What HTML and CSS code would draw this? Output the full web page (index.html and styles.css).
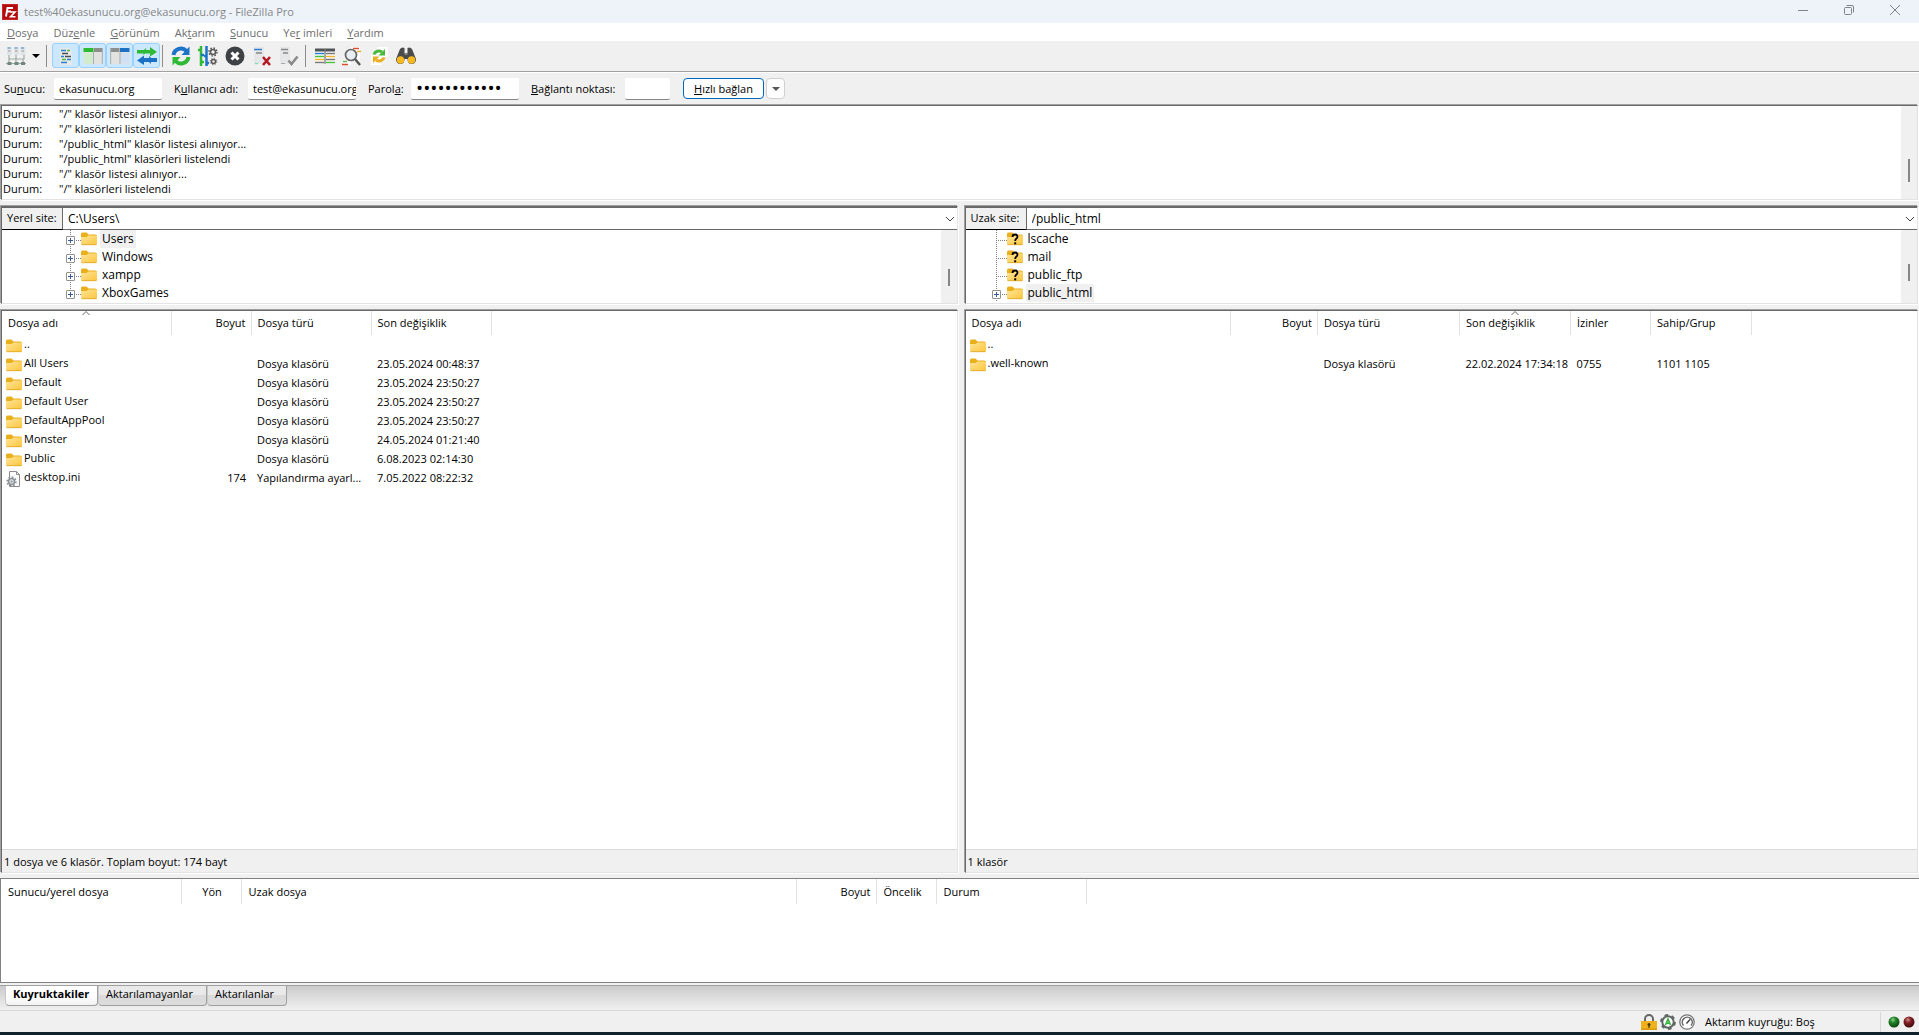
FILE: index.html
```html
<!DOCTYPE html>
<html lang="tr">
<head>
  <meta charset="utf-8">
  <title>test%40ekasunucu.org@ekasunucu.org - FileZilla Pro</title>
  <link rel="stylesheet" href="styles.css">
</head>
<body>

<!-- shared icons -->
<svg class="defs" aria-hidden="true">
  <defs>
    <linearGradient id="fold" x1="0" y1="0" x2="1" y2="1">
      <stop offset="0" stop-color="#ffe49a"/>
      <stop offset="1" stop-color="#fdc63c"/>
    </linearGradient>
    <radialGradient id="green" cx=".4" cy=".3" r=".7">
      <stop offset="0" stop-color="#8fce8f"/>
      <stop offset=".4" stop-color="#1f8426"/>
      <stop offset="1" stop-color="#0a4510"/>
    </radialGradient>
    <radialGradient id="red" cx=".4" cy=".3" r=".7">
      <stop offset="0" stop-color="#cf9090"/>
      <stop offset=".4" stop-color="#831f24"/>
      <stop offset="1" stop-color="#400a0e"/>
    </radialGradient>
    <symbol id="folder" viewBox="0 0 16 16">
      <path d="M0 3q0-1.500 1.500-1.500h4L7.500 3.500H14q2 0 2 1.500v3H0z" fill="#e9b01c"/>
      <path d="M0 6h5.500L7.500 4.500H15q1 0 1 1V12.500q0 1.500-1.500 1.500h-13Q0 14 0 12.500z" fill="url(#fold)"/>
      <path d="M.5 13.700h15" stroke="#dba523" stroke-width=".8"/>
    </symbol>
    <symbol id="unknown" viewBox="0 0 16 16">
      <use href="#folder"/>
      <path d="M5.500 6Q5.500 3.500 8 3.500t2.500 2.200Q10.500 7 9.200 7.800 8.200 8.500 8.200 10" fill="none" stroke="#000" stroke-width="1.800"/>
      <path d="M7.200 11.300h2v2h-2z"/>
    </symbol>
    <symbol id="ini" viewBox="0 0 16 16">
      <path d="M3.500.5h7l3 3v12h-10z" fill="#fafafa" stroke="#8c8c8c"/>
      <path d="M10.500.5v3h3" fill="none" stroke="#8c8c8c"/>
      <circle cx="5.500" cy="10.500" r="3" fill="#dfe3e6" stroke="#8b9196" stroke-width="1.500"/>
      <circle cx="5.500" cy="10.500" r="4.400" fill="none" stroke="#8b9196" stroke-width="1.500" stroke-dasharray="1.700 1.700"/>
      <circle cx="5.500" cy="10.500" r="1" fill="#8b9196"/>
    </symbol>
    <symbol id="sort" viewBox="0 0 8 4">
      <path d="M.5 4L4 .5 7.500 4" fill="none" stroke="#666"/>
    </symbol>
    <symbol id="chevron" viewBox="0 0 10 6">
      <path d="M1 1l4 4 4-4" fill="none" stroke="#444"/>
    </symbol>
  </defs>
</svg>

<header class="titlebar">
  <svg class="logo" viewBox="0 0 16 16">
    <path fill="#b00d0d" d="M0 0h16v16H0z"/>
    <path d="M.5.500h15v15H.5z" fill="none" stroke="#d44" stroke-dasharray="1 1"/>
    <path d="M4 12.500L5.500 4H11M5 7.500h4" fill="none" stroke="#fff" stroke-width="1.900"/>
    <path d="M8.500 8h4.500L8.500 12.700h5" fill="none" stroke="#fff" stroke-width="1.600"/>
  </svg>
  <span class="caption">test%40ekasunucu.org@ekasunucu.org - FileZilla Pro</span>
  <button class="winbtn" aria-label="Simge durumuna küçült"><svg viewBox="0 0 12 12"><path d="M1 6.500h10"/></svg></button>
  <button class="winbtn" aria-label="Önceki boyut"><svg viewBox="0 0 12 12"><rect x="1.500" y="3.500" width="7" height="7" rx="1"/><path d="M3.500 1.500H9q1.500 0 1.500 1.500v5.500"/></svg></button>
  <button class="winbtn" aria-label="Kapat"><svg viewBox="0 0 12 12"><path d="M1 1l10 10M11 1L1 11"/></svg></button>
</header>

<nav class="menu">
  <a href="#"><u>D</u>osya</a>
  <a href="#">Düz<u>e</u>nle</a>
  <a href="#"><u>G</u>örünüm</a>
  <a href="#">Ak<u>t</u>arım</a>
  <a href="#"><u>S</u>unucu</a>
  <a href="#">Ye<u>r</u> imleri</a>
  <a href="#"><u>Y</u>ardım</a>
</nav>

<div class="toolbar">
  <button class="tool" aria-label="Site yöneticisi">
    <svg viewBox="0 0 20 20">
      <path d="M1 1h5v8H1zM8 1h5v8H8zM14.500 1h5v8h-5z" fill="#dfe3e6"/>
      <path d="M1.500 2h3M8.500 2h3M15 2h3" stroke="#3a87cf" stroke-width="1.200"/>
      <path d="M2 5h2.500M9 5h2.500M15.500 5H18" stroke="#999"/>
      <path d="M3 9v4h15V9M10 9v7M3 13v3M17 13v3M0 17.500h20" fill="none" stroke="#9dabA5" stroke-width="1.200"/>
      <path d="M1.500 16h4v3h-4zM8.500 16h4v3h-4zM15 16h4v3h-4z" fill="#71867c"/>
    </svg>
  </button>
  <button class="drop" aria-label="Siteler"><svg viewBox="0 0 8 4"><path d="M0 0h8L4 4z"/></svg></button>
  <span class="sep"></span>
  <button class="tool on" aria-label="İleti günlüğü">
    <svg viewBox="0 0 20 20">
      <path d="M4 2h9l3 3v14H4z" fill="#e6e8ea"/>
      <path d="M5 4.500h5M5 10.500h3M11 13.500h4M5 16.500h6" stroke="#2f7fd0" stroke-width="1.300"/>
      <path d="M6 7.500h6M9 10.500h6" stroke="#4b5157" stroke-width="1.300"/>
      <path d="M6 13.500h4M11 4.500h3" stroke="#52b93f" stroke-width="1.300"/>
    </svg>
  </button>
  <button class="tool on" aria-label="Yerel klasör ağacı">
    <svg viewBox="0 0 20 20">
      <path d="M.5 2h19v16H.5z" fill="#e2e2e0"/>
      <path d="M.5 2h10v4H.5z" fill="#2dbb32"/><path d="M11 2h8.500v4H11z" fill="#8b8f8d"/>
      <path d="M1 7h8.500v10.500H1z" fill="#cfeccb"/><path d="M10.500 6v12M19.300 2v16" stroke="#a9adab" fill="none"/>
    </svg>
  </button>
  <button class="tool on" aria-label="Uzak klasör ağacı">
    <svg viewBox="0 0 20 20">
      <path d="M.5 2h19v16H.5z" fill="#e2e2e0"/>
      <path d="M.5 2h9v4h-9z" fill="#8b8f8d"/><path d="M10 2h9.500v4H10z" fill="#1c70c6"/>
      <path d="M10.500 7H19v10.500h-8.500z" fill="#cfe0f2"/><path d="M10 6v12M.7 2v16" stroke="#a9adab" fill="none"/>
    </svg>
  </button>
  <button class="tool on" aria-label="Aktarım kuyruğu">
    <svg viewBox="0 0 20 20">
      <path d="M0 4h7l2-2v2h4V1l7 5-7 4.500V7.500H8L6.500 9V7.500H0z" fill="#2fb936"/>
      <path d="M20 12h-6l-2-2v2H7V9.500l-7 5L7 19v-3h5l2 2v-2h6z" fill="#1d71c4"/>
    </svg>
  </button>
  <span class="sep tight"></span>
  <button class="tool" aria-label="Yenile">
    <svg viewBox="0 0 20 20">
      <path d="M2.500 9A7.500 7.500 0 0 1 15.500 5" fill="none" stroke="#1c73c8" stroke-width="4"/>
      <path d="M18.500.5v8.500h-8z" fill="#1c73c8"/>
      <path d="M17.500 11A7.500 7.500 0 0 1 4.500 15" fill="none" stroke="#2fb936" stroke-width="4"/>
      <path d="M1.500 19.500V11h8z" fill="#2fb936"/>
    </svg>
  </button>
  <button class="tool" aria-label="Kuyruğu işle">
    <svg viewBox="0 0 20 20">
      <path d="M3 0v20M0 4h3M3 16h3" stroke="#2fb936" stroke-width="2.500"/>
      <path d="M8.500 0v20M6 10h3M8 17h3M3 9h3" stroke="#1c73c8" stroke-width="2.500"/>
      <g fill="none" stroke="#575757">
        <circle cx="15" cy="6" r="2.500" stroke-width="1.500"/><circle cx="15" cy="6" r="4" stroke-width="1.500" stroke-dasharray="1.500 1.640"/>
        <circle cx="15.500" cy="15.500" r="2" stroke-width="1.500"/><circle cx="15.500" cy="15.500" r="3.300" stroke-dasharray="1.200 1.390"/>
      </g>
    </svg>
  </button>
  <button class="tool" aria-label="İptal">
    <svg viewBox="0 0 20 20">
      <circle cx="10" cy="10" r="9.500" fill="#3f4244"/>
      <path d="M6.500 6.500l7 7M13.500 6.500l-7 7" stroke="#fff" stroke-width="3"/>
    </svg>
  </button>
  <button class="tool" aria-label="Bağlantıyı kes">
    <svg viewBox="0 0 20 20">
      <path d="M2 1h10v17H2z" fill="#e4e6e7"/>
      <path d="M2 3.500h8" stroke="#2b7fd3" stroke-width="1.500"/><path d="M4 7h6" stroke="#777" stroke-width="1.300"/>
      <path d="M3 17.500h3" stroke="#8db" stroke-width="1.500"/>
      <path d="M11 11l7 8M18 11l-7 8" stroke="#b71722" stroke-width="2.600"/>
    </svg>
  </button>
  <button class="tool" aria-label="Yeniden bağlan">
    <svg viewBox="0 0 20 20">
      <path d="M1 1h10v17H1z" fill="#e4e6e7"/>
      <path d="M2 3.500h7M4 7h5" stroke="#888" stroke-width="1.500"/><path d="M2 17.500h4" stroke="#aaa"/>
      <path d="M9.500 14.500l3 3.500 6-7.500" fill="none" stroke="#8a8a8a" stroke-width="2.600"/>
    </svg>
  </button>
  <span class="sep"></span>
  <button class="tool" aria-label="Karşılaştır">
    <svg viewBox="0 0 20 20">
      <path d="M0 3h20v15H0z" fill="#fff"/>
      <path d="M0 4h20" stroke="#4f5455" stroke-width="3"/>
      <path d="M0 7.500h9" stroke="#2a7dd1" stroke-width="1.500"/><path d="M0 10.500h9M11 16.500h9" stroke="#4cbf40" stroke-width="1.500"/>
      <path d="M0 13.500h9M11 10.500h9" stroke="#f0b52d" stroke-width="1.500"/>
      <path d="M11 7.500h9M11 13.500h9M0 16.500h9M10 3v15" stroke="#777" stroke-width="1.300"/>
    </svg>
  </button>
  <button class="tool" aria-label="Süzgeç">
    <svg viewBox="0 0 20 20">
      <path d="M9 1h9v14H9z" fill="#fff"/><path d="M1 14h8v5H1z" fill="#fff"/>
      <path d="M11 2.500h6" stroke="#e04b32" stroke-width="1.500"/><path d="M15 5.500h4" stroke="#e8ad26" stroke-width="1.500"/>
      <path d="M1 15.500h4" stroke="#4fb942" stroke-width="1.500"/><path d="M0 18.500h6" stroke="#e04b32" stroke-width="1.500"/>
      <circle cx="9" cy="9" r="5.500" fill="#e8eef2" stroke="#676767" stroke-width="1.700"/>
      <path d="M13 13l5 6" stroke="#555" stroke-width="2.400"/>
    </svg>
  </button>
  <button class="tool" aria-label="Eşzamanlı gezinme">
    <svg viewBox="0 0 20 20">
      <path d="M8 1h11v10H8zM2 9h10v10H2z" fill="#fff"/>
      <path d="M5 8.500A5 4.500 0 0 1 13 6" fill="none" stroke="#48b93d" stroke-width="3"/><path d="M16 3v6.500H9.500z" fill="#48b93d"/>
      <path d="M15 11.500A5 4.500 0 0 1 7 14" fill="none" stroke="#eaad20" stroke-width="3"/><path d="M4 17v-6.500h6.500z" fill="#eaad20"/>
    </svg>
  </button>
  <button class="tool" aria-label="Dosya ara">
    <svg viewBox="0 0 20 20">
      <path d="M4 3q2-2.500 4.500-1v5h3V2q2.500-1.500 4.500 1l4 10q0 5-4.500 5-4 0-4-5h-3q0 5-4 5Q0 18 0 13z" fill="#4b4b4b"/>
      <circle cx="4.500" cy="14" r="3.700" fill="#f8b91f"/><circle cx="15.500" cy="14" r="3.700" fill="#f8b91f"/>
      <path d="M8.500 8h3" stroke="#999" stroke-width="1.500"/>
    </svg>
  </button>
</div>

<form class="quick">
  <label class="l-host" for="host">Su<u>n</u>ucu:</label>
  <input type="text" id="host" value="ekasunucu.org">
  <label class="l-user" for="user">K<u>u</u>llanıcı adı:</label>
  <input type="text" id="user" value="test@ekasunucu.org">
  <label class="l-pass" for="pass">Parol<u>a</u>:</label>
  <input type="password" id="pass" class="dots" value="123456789012">
  <label class="l-port" for="port"><u>B</u>ağlantı noktası:</label>
  <input type="text" id="port" class="port">
  <button type="button" class="connect"><u>H</u>ızlı bağlan</button>
  <button type="button" class="history" aria-label="Geçmiş"><svg viewBox="0 0 8 4"><path d="M0 0h8L4 4z" fill="#555"/></svg></button>
</form>

<section class="frame log">
  <table>
    <tr><td>Durum:</td><td>"/" klasör listesi alınıyor...</td></tr>
    <tr><td>Durum:</td><td>"/" klasörleri listelendi</td></tr>
    <tr><td>Durum:</td><td>"/public_html" klasör listesi alınıyor...</td></tr>
    <tr><td>Durum:</td><td>"/public_html" klasörleri listelendi</td></tr>
    <tr><td>Durum:</td><td>"/" klasör listesi alınıyor...</td></tr>
    <tr><td>Durum:</td><td>"/" klasörleri listelendi</td></tr>
  </table>
  <div class="scroll s-log"><i></i></div>
</section>

<main class="panes">
  <section class="pane local">
    <div class="frame top">
      <div class="path">
        <label for="lpath">Yerel site:</label>
        <div class="combo">
          <select id="lpath"><option>C:\Users\</option></select>
          <svg><use href="#chevron"/></svg>
        </div>
      </div>
      <div class="treebox">
        <ul class="tree">
          <li class="node"><b class="plus"></b><svg><use href="#folder"/></svg><span class="sel">Users</span></li>
          <li class="node"><b class="plus"></b><svg><use href="#folder"/></svg><span>Windows</span></li>
          <li class="node"><b class="plus"></b><svg><use href="#folder"/></svg><span>xampp</span></li>
          <li class="node last"><b class="plus"></b><svg><use href="#folder"/></svg><span>XboxGames</span></li>
        </ul>
        <div class="scroll s-local"><i></i></div>
      </div>
    </div>
    <div class="frame list">
      <div class="files">
        <table>
          <colgroup><col class="w169"><col class="w80"><col class="w120"><col class="w120"></colgroup>
          <thead>
            <tr><th>Dosya adı<svg class="sort"><use href="#sort"/></svg></th><th class="num">Boyut</th><th>Dosya türü</th><th>Son değişiklik</th></tr>
          </thead>
          <tbody>
            <tr><td class="name"><svg><use href="#folder"/></svg>..</td><td></td><td></td><td></td></tr>
            <tr><td class="name"><svg><use href="#folder"/></svg>All Users</td><td></td><td>Dosya klasörü</td><td>23.05.2024 00:48:37</td></tr>
            <tr><td class="name"><svg><use href="#folder"/></svg>Default</td><td></td><td>Dosya klasörü</td><td>23.05.2024 23:50:27</td></tr>
            <tr><td class="name"><svg><use href="#folder"/></svg>Default User</td><td></td><td>Dosya klasörü</td><td>23.05.2024 23:50:27</td></tr>
            <tr><td class="name"><svg><use href="#folder"/></svg>DefaultAppPool</td><td></td><td>Dosya klasörü</td><td>23.05.2024 23:50:27</td></tr>
            <tr><td class="name"><svg><use href="#folder"/></svg>Monster</td><td></td><td>Dosya klasörü</td><td>24.05.2024 01:21:40</td></tr>
            <tr><td class="name"><svg><use href="#folder"/></svg>Public</td><td></td><td>Dosya klasörü</td><td>6.08.2023 02:14:30</td></tr>
            <tr><td class="name"><svg><use href="#ini"/></svg>desktop.ini</td><td class="num">174</td><td>Yapılandırma ayarl...</td><td>7.05.2022 08:22:32</td></tr>
          </tbody>
        </table>
      </div>
      <div class="info">1 dosya ve 6 klasör. Toplam boyut: 174 bayt</div>
    </div>
  </section>

  <section class="pane remote">
    <div class="frame top">
      <div class="path">
        <label for="rpath">Uzak site:</label>
        <div class="combo">
          <select id="rpath"><option>/public_html</option></select>
          <svg><use href="#chevron"/></svg>
        </div>
      </div>
      <div class="treebox">
        <ul class="tree">
          <li class="node"><b></b><svg><use href="#unknown"/></svg><span>lscache</span></li>
          <li class="node"><b></b><svg><use href="#unknown"/></svg><span>mail</span></li>
          <li class="node"><b></b><svg><use href="#unknown"/></svg><span>public_ftp</span></li>
          <li class="node"><b class="plus"></b><svg><use href="#folder"/></svg><span class="sel">public_html</span></li>
        </ul>
        <div class="scroll s-remote"><i></i></div>
      </div>
    </div>
    <div class="frame list">
      <div class="files">
        <table>
          <colgroup><col class="w265"><col class="w87"><col class="w142"><col class="w111"><col class="w80"><col class="w101"></colgroup>
          <thead>
            <tr><th>Dosya adı</th><th class="num">Boyut</th><th>Dosya türü</th><th>Son değişiklik<svg class="sort"><use href="#sort"/></svg></th><th>İzinler</th><th>Sahip/Grup</th></tr>
          </thead>
          <tbody>
            <tr><td class="name"><svg><use href="#folder"/></svg>..</td><td></td><td></td><td></td><td></td><td></td></tr>
            <tr><td class="name"><svg><use href="#folder"/></svg>.well-known</td><td></td><td>Dosya klasörü</td><td>22.02.2024 17:34:18</td><td>0755</td><td>1101 1105</td></tr>
          </tbody>
        </table>
      </div>
      <div class="info">1 klasör</div>
    </div>
  </section>
</main>

<section class="queue">
  <table>
    <colgroup><col class="w180"><col class="w60"><col class="w555"><col class="w80"><col class="w60"><col class="w150"></colgroup>
    <thead>
      <tr><th>Sunucu/yerel dosya</th><th class="mid">Yön</th><th>Uzak dosya</th><th class="num">Boyut</th><th>Öncelik</th><th>Durum</th></tr>
    </thead>
  </table>
</section>

<div class="tabs">
  <button class="tab active">Kuyruktakiler</button>
  <button class="tab">Aktarılamayanlar</button>
  <button class="tab short">Aktarılanlar</button>
</div>

<footer class="status">
  <svg viewBox="0 0 16 16">
    <path d="M4 8V5a4 4 0 0 1 8 0v3" fill="none" stroke="#666" stroke-width="2"/>
    <path d="M0 7h16v9H0z" fill="#f0b21c"/><path d="M0 14.500h16V16H0z" fill="#d99b0c"/>
    <circle cx="8" cy="10.500" r="1.500" fill="#4d3b11"/><path d="M8 11v3" stroke="#4d3b11" stroke-width="1.300"/>
  </svg>
  <svg viewBox="0 0 16 16">
    <circle cx="8" cy="8" r="5.700" fill="#fff" stroke="#5f6562" stroke-width="2"/>
    <circle cx="8" cy="8" r="7" fill="none" stroke="#5f6562" stroke-width="1.800" stroke-dasharray="3.600 3.730"/>
    <path d="M5.500 11L8 5l2.500 6M6.500 9.300h3" fill="none" stroke="#35b23b" stroke-width="1.600"/>
  </svg>
  <svg viewBox="0 0 16 16">
    <circle cx="8" cy="8" r="7.200" fill="#fff" stroke="#777" stroke-width="1.300"/>
    <path d="M4.500 11.500A5 5 0 1 1 12 11.500" fill="none" stroke="#666" stroke-width="1.500"/>
    <path d="M7.500 9.500L11 5.500" stroke="#444" stroke-width="1.500"/>
  </svg>
  <span class="qtext">Aktarım kuyruğu: Boş</span>
  <span class="leds">
    <svg viewBox="0 0 12 12"><circle cx="6" cy="6" r="5.500" fill="url(#green)"/></svg>
    <svg viewBox="0 0 12 12"><circle cx="6" cy="6" r="5.500" fill="url(#red)"/></svg>
  </span>
</footer>

</body>
</html>
```

FILE: styles.css
```css
* {
  box-sizing: border-box;
}
body {
  margin: 0;
  min-height: 100vh;
  display: flex;
  flex-direction: column;
  background: #f0f0f0;
  border-bottom: 3px solid #10232d;
  color: #000;
}
body, button, input, select {
  font-family: "Segoe UI", "Open Sans", sans-serif;
  font-size: 11px;
}
button {
  border: 0;
  padding: 0;
  background: none;
}
table {
  border-collapse: collapse;
  table-layout: fixed;
}
.defs {
  position: absolute;
  width: 0;
  height: 0;
}

/* title bar and menu */
.titlebar {
  display: flex;
  align-items: center;
  height: 23px;
  padding: 0 1px 0 2px;
  background: #eef3f9;
  color: #858789;
}
.logo {
  width: 16px;
  height: 16px;
  margin-right: 6px;
}
.caption {
  flex: 1;
}
.winbtn {
  width: 46px;
  height: 20px;
}
.winbtn svg {
  width: 12px;
  height: 12px;
  fill: none;
  stroke: #808488;
}
.menu {
  display: flex;
  gap: 15px;
  height: 18px;
  padding-left: 7px;
  background: #fff;
  line-height: 20px;
}
.menu a {
  color: #6d6d6d;
  text-decoration: none;
}

/* toolbar */
.toolbar {
  display: flex;
  align-items: center;
  height: 31px;
  padding: 0 0 1px 2px;
  border-bottom: 1px solid #a0a0a0;
}
.tool {
  display: flex;
  align-items: center;
  justify-content: center;
  width: 27px;
  height: 25px;
}
.tool svg {
  width: 20px;
  height: 20px;
}
.tool.on {
  background: #cce8ff;
  border: 1px solid #99d1ff;
  border-radius: 3px;
}
.drop {
  width: 14px;
  height: 24px;
}
.drop svg, .history svg {
  display: block;
  width: 8px;
  height: 4px;
  margin: auto;
}
.sep {
  width: 1px;
  height: 22px;
  margin: 0 5px 0 3px;
  background: #8d8d8d;
}
.sep.tight {
  margin: 0 4px 0 2px;
}

/* quick connect */
.quick {
  display: flex;
  align-items: center;
  height: 32px;
  padding: 0 4px;
  border-top: 1px solid #fff;
}
.quick input {
  width: 108px;
  height: 22px;
  padding: 0 0 0 5px;
  border: 0;
  border-bottom: 1px solid #868686;
  border-radius: 2px;
  background: #fff;
}
.quick input.dots {
  font-size: 19px;
}
.quick input.port {
  width: 45px;
}
.quick label {
  flex: none;
  white-space: nowrap;
}
.quick .l-host {
  width: 50px;
}
.quick .l-user {
  width: 86px;
  padding-left: 12px;
}
.quick .l-pass {
  width: 55px;
  padding-left: 12px;
}
.quick .l-port {
  width: 106px;
  padding-left: 12px;
}
.connect {
  width: 81px;
  height: 21px;
  margin: 0 2px 0 13px;
  background: #fdfdfd;
  border: 1px solid #0067c0;
  border-radius: 4px;
  white-space: nowrap;
}
.history {
  width: 19px;
  height: 21px;
  background: #fdfdfd;
  border: 1px solid #d0d0d0;
  border-radius: 4px;
}

/* sunken boxes */
.frame {
  margin: 1px;
  background: #fff;
  border: 1px solid;
  border-color: #696969 #e3e3e3 #e3e3e3 #696969;
  box-shadow: -1px -1px 0 #a0a0a0, 1px 1px 0 #fff;
}
.scroll {
  flex: none;
  width: 16px;
  background: #f0f0f0;
}
.scroll i {
  display: block;
  width: 2px;
  margin-left: 7px;
  background: #858585;
}
.s-log i {
  height: 23px;
  margin-top: 53px;
}
.s-local i {
  height: 17px;
  margin-top: 39px;
}
.s-remote i {
  height: 17px;
  margin-top: 34px;
}
.log {
  display: flex;
  justify-content: space-between;
  height: 95px;
}
.log table {
  align-self: flex-start;
}
.log td {
  height: 15px;
  padding: 0 0 0 1px;
  line-height: 15px;
  white-space: nowrap;
}
.log td:first-child {
  width: 56px;
}

/* local and remote sides */
.panes {
  flex: 1;
  display: flex;
  gap: 5px;
  margin: 4px 0;
}
.pane {
  display: flex;
  flex-direction: column;
  gap: 4px;
  min-width: 0;
}
.local {
  flex: 0 0 calc(50% - 1px);
}
.remote {
  flex: 1;
}
.path {
  display: flex;
  height: 23px;
  border-top: 1px solid #696969;
  border-bottom: 1px solid #696969;
}
.path label {
  height: 22px;
  width: 61px;
  padding-left: 5px;
  background: #f0f0f0;
  border-right: 1px solid #696969;
  border-bottom: 1px solid #000;
  line-height: 20px;
  white-space: nowrap;
}
.combo {
  flex: 1;
  position: relative;
}
.combo select {
  appearance: none;
  width: 100%;
  height: 21px;
  padding: 0 5px;
  border: 0;
  background: #fff;
  font-size: 12px;
}
.combo svg {
  position: absolute;
  right: 2px;
  top: 8px;
  width: 10px;
  height: 6px;
}
.treebox {
  display: flex;
  height: 73px;
  overflow: hidden;
  font-size: 12px;
}
.tree {
  flex: 1;
  margin: 0;
  padding: 0 0 0 64px;
  list-style: none;
}
.remote .tree {
  padding-left: 26px;
}
.node {
  display: flex;
  align-items: center;
  height: 18px;
  background:
    repeating-linear-gradient(#808080 0 1px, transparent 1px 2px) 4px 0 / 1px 18px no-repeat,
    repeating-linear-gradient(90deg, #808080 0 1px, transparent 1px 2px) 4px 10px / 11px 1px no-repeat;
}
.node.last {
  background-size: 1px 10px, 11px 1px;
}
.node b {
  width: 15px;
}
/* expander box, the plus is drawn with two bars */
.node .plus {
  width: 9px;
  height: 9px;
  margin: 2px 6px 0 0;
  border: 1px solid #919191;
  border-radius: 1px;
  background:
    linear-gradient(#3b5a9a, #3b5a9a) center / 5px 1px no-repeat,
    linear-gradient(#3b5a9a, #3b5a9a) center / 1px 5px no-repeat,
    #fff;
}
.node svg {
  width: 16px;
  height: 16px;
  margin-right: 3px;
}
.node span {
  height: 18px;
  padding: 0 2px;
  line-height: 18px;
}
.node .sel {
  background: #f0f0f0;
}

/* file lists */
.list {
  flex: 1;
  display: flex;
  flex-direction: column;
}
.files {
  flex: 1;
}
.files table, .queue table {
  width: 0;
}
th {
  position: relative;
  height: 24px;
  padding: 0 5px 1px 6px;
  border-right: 1px solid #e2e2e2;
  font-weight: normal;
  text-align: left;
  white-space: nowrap;
}
.files td {
  height: 19px;
  padding: 0 4px 0 6px;
  line-height: 18px;
  white-space: nowrap;
}
.files td.name {
  padding-left: 4px;
}
.name svg {
  width: 16px;
  height: 16px;
  margin-right: 2px;
  vertical-align: middle;
}
th.num, .files td.num {
  padding-right: 5px;
  text-align: right;
}
th.mid {
  text-align: center;
}
.sort {
  position: absolute;
  left: calc(50% - 4px);
  top: 0;
  width: 8px;
  height: 4px;
}
.w60 { width: 60px; }
.w80 { width: 80px; }
.w87 { width: 87px; }
.w101 { width: 101px; }
.w111 { width: 111px; }
.w120 { width: 120px; }
.w142 { width: 142px; }
.w150 { width: 150px; }
.w169 { width: 169px; }
.w180 { width: 180px; }
.w265 { width: 265px; }
.w555 { width: 555px; }
.info {
  height: 23px;
  padding-left: 2px;
  background: #f0f0f0;
  border-top: 1px solid #dadada;
  line-height: 24px;
}

/* queue */
.queue {
  height: 105px;
  background: #fff;
  border: 1px solid #828282;
  border-right: 0;
}
.queue th {
  height: 25px;
  padding-left: 7px;
}
.tabs {
  display: flex;
  height: 25px;
  margin-top: 2px;
  padding-left: 5px;
  border-top: 1px solid #a0a0a0;
  background: linear-gradient(#cbcbcb, #f0f0f0);
}
.tab {
  height: 20px;
  width: 109px;
  padding: 0 0 3px 7px;
  background: linear-gradient(#e9e9e9 45%, #dadada 50%, #dcdcdc);
  border: 1px solid #a0a0a0;
  border-top: 0;
  border-left-color: #c8c8c8;
  border-radius: 0 0 4px 4px;
  line-height: 16px;
  text-align: left;
  white-space: nowrap;
}
.tab.active {
  width: 93px;
  background: linear-gradient(#fff 50%, #f2f2f2);
  font-weight: bold;
}
.tab.short {
  width: 80px;
}

/* status bar */
.status {
  display: flex;
  align-items: center;
  justify-content: flex-end;
  gap: 3px;
  height: 22px;
  border-top: 1px solid #d7d7d7;
}
.status svg {
  width: 16px;
  height: 16px;
}
.qtext {
  width: 179px;
  padding-left: 7px;
}
.leds {
  display: flex;
  align-items: center;
  gap: 3px;
  height: 20px;
  padding: 0 4px 0 7px;
  border-left: 1px solid #d7d7d7;
}
.leds svg {
  width: 12px;
  height: 12px;
}
```
